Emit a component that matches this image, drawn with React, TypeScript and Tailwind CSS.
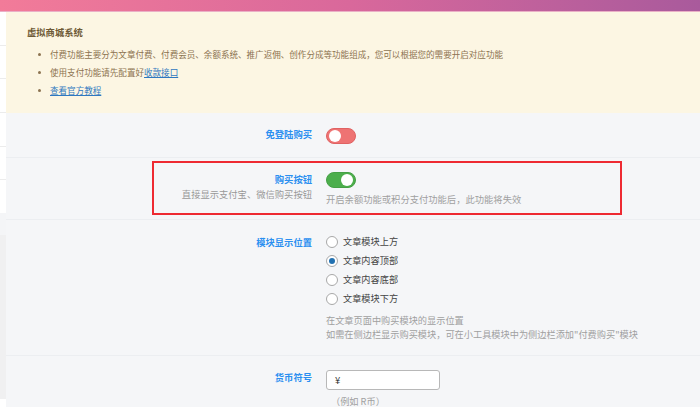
import React from "react";

const font = { fontFamily: '"Noto Sans CJK SC", "Noto Sans", sans-serif' };

function Toggle({ on }: { on: boolean }) {
  return (
    <div
      className={
        "w-[30px] h-[16px] rounded-full relative " +
        (on ? "bg-[#4cae4c] border border-[#45a045]" : "bg-[#ee7373] border border-[#e06262]")
      }
    >
      <div
        className={
          "absolute top-[1px] w-[12px] h-[12px] rounded-full bg-white " + (on ? "right-[2px]" : "left-[2px]")
        }
      />
    </div>
  );
}

function Radio({ checked, label }: { checked?: boolean; label: string }) {
  return (
    <div className="flex items-center h-[19px]">
      <div className="w-[12px] h-[12px] rounded-full border border-[#a8a8a8] bg-white flex items-center justify-center">
        {checked && <div className="w-[6px] h-[6px] rounded-full bg-[#2271b1]" />}
      </div>
      <span className="ml-[5px] text-[9.2px] text-[#444]">{label}</span>
    </div>
  );
}

export default function App() {
  return (
    <div className="w-[700px] h-[407px] overflow-hidden bg-white" style={font}>
      <div className="h-[12px] bg-gradient-to-r from-[#f27b99] via-[#d9689b] to-[#a95a9c] border-b border-[#eab0c6]" />
      <div className="flex">
        <div className="w-[6px] flex flex-col">
          <div className="h-[34px] border-b border-[#ececec] bg-white" />
          <div className="h-[33px] border-b border-[#ececec] bg-white" />
          <div className="h-[34px] border-b border-[#ececec] bg-white" />
          <div className="h-[34px] border-b border-[#ececec] bg-white" />
          <div className="h-[33px] border-b border-[#ececec] bg-white" />
          <div className="h-[33px] bg-white" />
          <div className="h-[22px] bg-[#f4f5f7]" />
          <div className="h-[164px] bg-[#f0f0f1]" />
          <div className="h-[10px] bg-white" />
        </div>
        <div className="flex-1 bg-[#f5f6f8]">
          {/* notice */}
          <div className="bg-[#fcf6e3] h-[101px] pl-[21px] pt-[13px]">
            <div className="text-[9.3px] leading-[14px] font-bold text-[#6e5a36]">虚拟商城系统</div>
            <ul className="mt-[6px] text-[8.55px] leading-[18px] text-[#8c7350]">
              <li className="flex items-center">
                <span className="w-[3px] h-[3px] rounded-full bg-[#8c7350] ml-[11px] mr-[9px]" />
                付费功能主要分为文章付费、付费会员、余额系统、推广返佣、创作分成等功能组成，您可以根据您的需要开启对应功能
              </li>
              <li className="flex items-center">
                <span className="w-[3px] h-[3px] rounded-full bg-[#8c7350] ml-[11px] mr-[9px]" />
                使用支付功能请先配置好<span className="text-[#2f78c0] underline">收款接口</span>
              </li>
              <li className="flex items-center">
                <span className="w-[3px] h-[3px] rounded-full bg-[#8c7350] ml-[11px] mr-[9px]" />
                <span className="text-[#2f78c0] underline">查看官方教程</span>
              </li>
            </ul>
          </div>

          {/* row 1 */}
          <div className="flex items-center h-[45px] border-b border-[#eceef1]">
            <div className="w-[306px] text-right text-[9.3px] font-bold text-[#2b8ff0]">免登陆购买</div>
            <div className="ml-[14px] pt-[1px]">
              <Toggle on={false} />
            </div>
          </div>

          {/* row 2 */}
          <div className="relative flex h-[62px] border-b border-[#eceef1]">
            <div className="w-[306px] text-right pt-[14px]">
              <div className="text-[9.3px] leading-[14px] font-bold text-[#2b8ff0]">购买按钮</div>
              <div className="text-[9.3px] leading-[16px] text-[#999]">直接显示支付宝、微信购买按钮</div>
            </div>
            <div className="ml-[14px] pt-[14px]">
              <Toggle on={true} />
              <div className="mt-[4px] text-[9.3px] leading-[14px] text-[#a0a0a0]">开启余额功能或积分支付功能后，此功能将失效</div>
            </div>
            <div className="absolute left-[146px] top-[3px] w-[470px] h-[54px] border-2 border-[#ee2a32]" />
          </div>

          {/* row 3 */}
          <div className="flex h-[136px] border-b border-[#eceef1]">
            <div className="w-[306px] text-right pt-[15px]">
              <div className="text-[9.3px] leading-[14px] font-bold text-[#2b8ff0]">模块显示位置</div>
            </div>
            <div className="ml-[14px] pt-[12px]">
              <Radio label="文章模块上方" />
              <Radio checked label="文章内容顶部" />
              <Radio label="文章内容底部" />
              <Radio label="文章模块下方" />
              <div className="mt-[5px] text-[9.2px] leading-[14px] text-[#a0a0a0]">
                <div>在文章页面中购买模块的显示位置</div>
                <div>如需在侧边栏显示购买模块，可在小工具模块中为侧边栏添加"付费购买"模块</div>
              </div>
            </div>
          </div>

          {/* row 4 */}
          <div className="flex">
            <div className="w-[306px] text-right pt-[14px]">
              <div className="text-[9.3px] leading-[14px] font-bold text-[#2b8ff0]">货币符号</div>
            </div>
            <div className="ml-[14px] pt-[14px]">
              <div className="w-[114px] h-[20px] bg-white border border-[#b8b8b8] rounded-[3px] flex items-center pl-[8px] text-[9.5px] text-[#333]">
                ¥
              </div>
              <div className="mt-[4px] ml-[5px] text-[9.2px] leading-[14px] text-[#a0a0a0]">（例如 R币）</div>
            </div>
          </div>
        </div>
      </div>
    </div>
  );
}
